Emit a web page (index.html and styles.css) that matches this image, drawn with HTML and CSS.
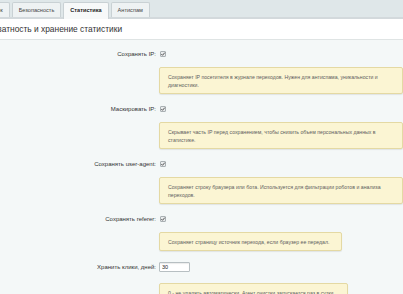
FILE: index.html
```html
<!DOCTYPE html>
<html lang="ru">
<head>
    <meta charset="UTF-8">
    <title>Статистика</title>
    <link rel="stylesheet" href="styles.css">
</head>
<body>

<!-- Tabs -->
<div class="tabs">
    <span class="tab tab-first">Список</span>
    <span class="tab">Безопасность</span>
    <span class="tab tab-active">Статистика</span>
    <span class="tab">Антиспам</span>
</div>

<div class="section-title">Приватность и хранение статистики</div>

<div class="form">
    <!-- Save IP -->
    <div class="row">
        <div class="label">Сохранять IP:</div>
        <div class="field"><span class="check"><svg viewBox="0 0 6 6" width="6" height="6"><path d="M1.3 3.1 L2.5 4.3 L4.8 1.6" fill="none" stroke="#444" stroke-width="0.9"/></svg></span></div>
    </div>
    <div class="row row-hint">
        <div class="label"></div>
        <div class="field"><div class="hint">Сохраняет IP посетителя в журнале переходов. Нужен для антиспама, уникальности и диагностики.</div></div>
    </div>

    <!-- Mask IP -->
    <div class="row">
        <div class="label">Маскировать IP:</div>
        <div class="field"><span class="check"><svg viewBox="0 0 6 6" width="6" height="6"><path d="M1.3 3.1 L2.5 4.3 L4.8 1.6" fill="none" stroke="#444" stroke-width="0.9"/></svg></span></div>
    </div>
    <div class="row row-hint">
        <div class="label"></div>
        <div class="field"><div class="hint">Скрывает часть IP перед сохранением, чтобы снизить объем персональных данных в статистике.</div></div>
    </div>

    <!-- User agent -->
    <div class="row">
        <div class="label">Сохранять user-agent:</div>
        <div class="field"><span class="check"><svg viewBox="0 0 6 6" width="6" height="6"><path d="M1.3 3.1 L2.5 4.3 L4.8 1.6" fill="none" stroke="#444" stroke-width="0.9"/></svg></span></div>
    </div>
    <div class="row row-hint">
        <div class="label"></div>
        <div class="field"><div class="hint">Сохраняет строку браузера или бота. Используется для фильтрации роботов и анализа переходов.</div></div>
    </div>

    <!-- Referer -->
    <div class="row">
        <div class="label">Сохранять referer:</div>
        <div class="field"><span class="check"><svg viewBox="0 0 6 6" width="6" height="6"><path d="M1.3 3.1 L2.5 4.3 L4.8 1.6" fill="none" stroke="#444" stroke-width="0.9"/></svg></span></div>
    </div>
    <div class="row row-hint">
        <div class="label"></div>
        <div class="field"><div class="hint">Сохраняет страницу источник перехода, если браузер ее передал.</div></div>
    </div>

    <!-- Keep days -->
    <div class="row row-input">
        <div class="label">Хранить клики, дней:</div>
        <div class="field"><input type="text" class="days" value="30"></div>
    </div>
    <div class="row row-hint">
        <div class="label"></div>
        <div class="field"><div class="hint">0 - не удалять автоматически. Агент очистки запускается раз в сутки.</div></div>
    </div>
</div>

</body>
</html>
```

FILE: styles.css
```css
html, body {
    overflow: hidden;
}

body {
    font-family: 'Liberation Sans', Arial, sans-serif;
    margin: 0;
    background-color: #f4f8f8;
    color: #000;
}

/* Tabs */
.tabs {
    display: flex;
    align-items: flex-end;
    height: 17px;
    background-color: #dfe7e9;
    border-bottom: 2px solid #d3d9dc;
}

.tab {
    display: block;
    height: 14px;
    line-height: 14px;
    padding: 0 6px;
    margin-right: 2px;
    font-size: 5.6px;
    color: #444;
    background-color: #eef2f3;
    border: 1px solid #c9d1d4;
    border-bottom: none;
    border-radius: 2px 2px 0 0;
    white-space: nowrap;
}

.tab-first {
    margin-left: -23px;
}

.tab-active {
    height: 16px;
    margin-bottom: -2px;
    font-weight: bold;
    color: #222;
    background-color: #f7f9f9;
}

/* Section heading */
.section-title {
    height: 20px;
    line-height: 20px;
    font-size: 8.4px;
    color: #333;
    background-color: #fff;
    border-bottom: 1px solid #dfe4e4;
    text-indent: -18px;
    white-space: nowrap;
    overflow: hidden;
}

/* Form rows */
.form {
    padding-top: 10px;
}

.row {
    display: flex;
    margin-bottom: 8px;
}

.row-hint,
.row-input {
    margin-bottom: 11px;
}

.label {
    width: 159px;
    flex-shrink: 0;
    box-sizing: border-box;
    padding-right: 3px;
    text-align: right;
    font-size: 6px;
    line-height: 9px;
    color: #333;
    white-space: nowrap;
}

.row-input .label {
    line-height: 10px;
}

.field {
    flex-grow: 1;
    font-size: 5.2px;
    line-height: 9px;
}

.check {
    display: inline-block;
    width: 6px;
    height: 6px;
    margin: 1px 0 0 1px;
    vertical-align: top;
    box-sizing: border-box;
    border: 1px solid #a9b0b3;
    border-radius: 1px;
    background-color: #e9eced;
}

.check svg {
    display: block;
    margin: -1px;
}

.days {
    display: block;
    width: 31px;
    height: 10px;
    box-sizing: border-box;
    margin: 0;
    padding: 0 2px;
    font-family: 'Liberation Sans', Arial, sans-serif;
    font-size: 5.5px;
    color: #222;
    border: 1px solid #b7bfc2;
    border-radius: 1px;
    background-color: #fff;
    box-shadow: inset 0 1px 1px rgba(0, 0, 0, 0.08);
}

.hint {
    display: inline-block;
    max-width: 262px;
    box-sizing: border-box;
    padding: 4.5px 12px 4.5px 8px;
    line-height: 8px;
    color: #5e5e5e;
    background-color: #fbf5d3;
    border: 1px solid #e4d9a3;
    border-radius: 2px;
    box-shadow: 0 1px 1px rgba(0, 0, 0, 0.08);
}
```
